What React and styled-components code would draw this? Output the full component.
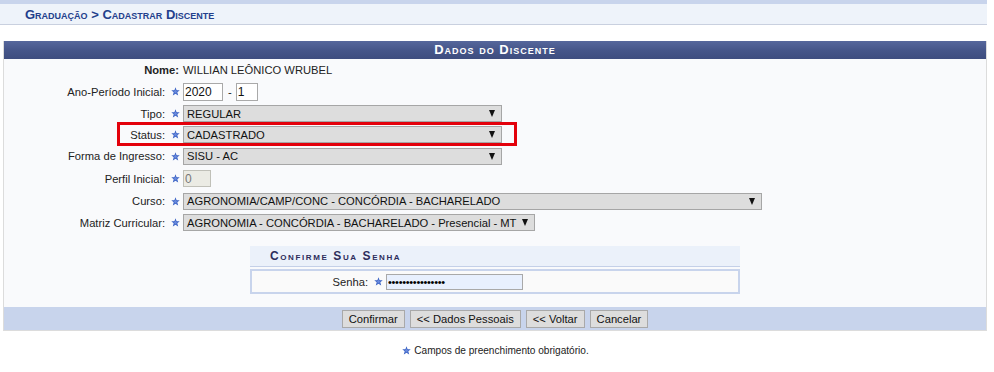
import React from 'react';
import styled, { createGlobalStyle } from 'styled-components';

const Global = createGlobalStyle`
  html, body {
    margin: 0;
    padding: 0;
    background: #fff;
  }
  body {
    font-family: "Liberation Sans", Arial, sans-serif;
    font-size: 11.2px;
    color: #222;
  }
`;

const Page = styled.div`
  width: 987px;
`;

const TopBand = styled.div`
  height: 4px;
  background: #c8d4ec;
`;

const Crumb = styled.div`
  height: 21px;
  background: #eef3fa;
  border-bottom: 1px solid #c9d0df;
  padding-left: 25px;
  padding-top: 1px;
  box-sizing: border-box;
  display: flex;
  align-items: center;
  font-weight: bold;
  font-variant: small-caps;
  font-size: 13px;
  color: #23408c;
`;

const Panel = styled.div`
  margin: 16px 0 0 3px;
  border-left: 1px solid #dcdcdc;
  border-right: 1px solid #dcdcdc;
  border-bottom: 1px solid #dcdcdc;
`;

const Caption = styled.div`
  height: 18px;
  background: linear-gradient(#56679c, #46568a 50%, #3e4d7f);
  color: #fff;
  font-weight: bold;
  font-variant: small-caps;
  font-size: 13px;
  letter-spacing: 1px;
  text-align: center;
  line-height: 18px;
`;

const Body = styled.div`
  background: #f9fafc;
  padding: 1px 0 13px;
`;

const Row = styled.div`
  position: relative;
  display: flex;
  align-items: center;
  height: ${p => p.h}px;
`;

const Label = styled.div`
  width: ${p => p.w || 163}px;
  text-align: right;
  padding-right: 2px;
  box-sizing: border-box;
  font-weight: ${p => (p.bold ? 'bold' : 'normal')};
`;

const Value = styled.div`
  margin-left: 2px;
`;

const StarBox = styled.span`
  width: 16px;
  display: inline-flex;
  justify-content: center;
  align-items: center;
`;

const Star = () => (
  <StarBox>
    <svg width="9" height="9" viewBox="0 0 10 10">
      <path
        d="M5 0.3 L6.2 3.5 L9.7 3.6 L7 5.8 L8 9.4 L5 7.4 L2 9.4 L3 5.8 L0.3 3.6 L3.8 3.5 Z"
        fill="#3a62c4"
      />
      <path d="M5 2.5 L5.7 4.4 L7.5 4.5 L6 5.6 L6.4 7.4 L5 6.4 L3.6 7.4 L4 5.6 L2.5 4.5 L4.3 4.4 Z" fill="#6a8ade" />
    </svg>
  </StarBox>
);

const TextBox = styled.div`
  width: ${p => p.w}px;
  height: ${p => (p.disabled ? 17 : 18)}px;
  box-sizing: border-box;
  border: 1px solid ${p => (p.disabled ? '#c0c0b8' : '#a9a9a9')};
  background: ${p => (p.disabled ? '#ebebe4' : '#fff')};
  color: ${p => (p.disabled ? '#777' : '#111')};
  padding: 0 1px;
  line-height: 16px;
  font-size: 12px;
  overflow: hidden;
  white-space: nowrap;
`;

const Dash = styled.span`
  margin: 0 4px 0 5px;
`;

const Select = styled.div`
  width: ${p => p.w}px;
  height: 17px;
  box-sizing: border-box;
  border: 1px solid #a6a6a6;
  background: #dddddd;
  display: flex;
  align-items: center;
  justify-content: space-between;
  padding: 0 6px 0 3px;
  font-size: 11.2px;
  color: #111;
  white-space: nowrap;
  overflow: hidden;
`;

const Arrow = styled.span`
  flex: none;
  width: 0;
  height: 0;
  margin-left: 4px;
  border-left: 3.5px solid transparent;
  border-right: 3.5px solid transparent;
  border-top: 7px solid #111;
`;

const Highlight = styled.div`
  position: absolute;
  left: 113px;
  top: -2px;
  width: 400px;
  height: 24px;
  border: 3px solid #e3000b;
  box-sizing: border-box;
  pointer-events: none;
`;

const Sub = styled.div`
  width: 490px;
  margin: 13px auto 0;
`;

const SubCaption = styled.div`
  height: 20px;
  background: #ebf1fa;
  border-bottom: 1px solid #c4d0e8;
  padding-left: 20px;
  line-height: 20px;
  font-weight: bold;
  font-variant: small-caps;
  font-size: 12px;
  letter-spacing: 1.6px;
  color: #2d2d5c;
`;

const SubBody = styled.div`
  margin-top: 2px;
  border: 2px solid #c8d4ec;
  background: #fafafa;
  height: 21px;
  display: flex;
  align-items: center;
`;

const Pass = styled.input`
  width: 137px;
  height: 16px;
  box-sizing: border-box;
  border: 1px solid #a9a9a9;
  background: #e8f0fe;
  padding: 0 1px;
  font-family: "Liberation Sans", Arial, sans-serif;
  font-size: 11px;
  letter-spacing: -0.3px;
  margin: 0;
  outline: none;
`;

const Footer = styled.div`
  height: 23px;
  background: #c8d4ec;
  display: flex;
  justify-content: center;
  align-items: center;
  gap: 5px;
`;

const Button = styled.button`
  height: 18px;
  padding: 0 6px;
  border: 1px solid #a9a9a9;
  background: #dddddd;
  font-family: "Liberation Sans", Arial, sans-serif;
  font-size: 11.2px;
  color: #111;
  margin: 0;
`;

const Note = styled.div`
  margin-top: 14px;
  font-size: 10.1px;
  display: flex;
  justify-content: center;
  align-items: center;
`;

const rows = [
  { label: 'Tipo:', value: 'REGULAR', w: 319, h: 21 },
  { label: 'Status:', value: 'CADASTRADO', w: 319, h: 21, mark: true },
  { label: 'Forma de Ingresso:', value: 'SISU - AC', w: 319, h: 22 },
];

export default function App() {
  return (
    <Page>
      <Global />
      <TopBand />
      <Crumb>Graduação &gt; Cadastrar Discente</Crumb>

      <Panel>
        <Caption>Dados do Discente</Caption>
        <Body>
          <Row h={20}>
            <Label bold w={177}>Nome:</Label>
            <Value>WILLIAN LEÔNICO WRUBEL</Value>
          </Row>
          <Row h={23}>
            <Label>Ano-Período Inicial:</Label>
            <Star />
            <TextBox w={40}>2020</TextBox>
            <Dash>-</Dash>
            <TextBox w={22}>1</TextBox>
          </Row>
          {rows.map((r, i) => (
            <Row h={r.h} key={i}>
              <Label>{r.label}</Label>
              <Star />
              <Select w={r.w}>
                {r.value}
                <Arrow />
              </Select>
              {r.mark && <Highlight />}
            </Row>
          ))}
          <Row h={23}>
            <Label>Perfil Inicial:</Label>
            <Star />
            <TextBox w={28} disabled>0</TextBox>
          </Row>
          <Row h={22}>
            <Label>Curso:</Label>
            <Star />
            <Select w={579}>
              AGRONOMIA/CAMP/CONC - CONCÓRDIA - BACHARELADO
              <Arrow />
            </Select>
          </Row>
          <Row h={21}>
            <Label>Matriz Curricular:</Label>
            <Star />
            <Select w={352}>
              AGRONOMIA - CONCÓRDIA - BACHARELADO - Presencial - MT
              <Arrow />
            </Select>
          </Row>

          <Sub>
            <SubCaption>Confirme Sua Senha</SubCaption>
            <SubBody>
              <Label w={118}>Senha:</Label>
              <Star />
              <Pass type="password" defaultValue="xxxxxxxxxxxxxxxx" readOnly />
            </SubBody>
          </Sub>
        </Body>
        <Footer>
          <Button>Confirmar</Button>
          <Button>&lt;&lt; Dados Pessoais</Button>
          <Button>&lt;&lt; Voltar</Button>
          <Button>Cancelar</Button>
        </Footer>
      </Panel>

      <Note>
        <Star />
        Campos de preenchimento obrigatório.
      </Note>
    </Page>
  );
}
